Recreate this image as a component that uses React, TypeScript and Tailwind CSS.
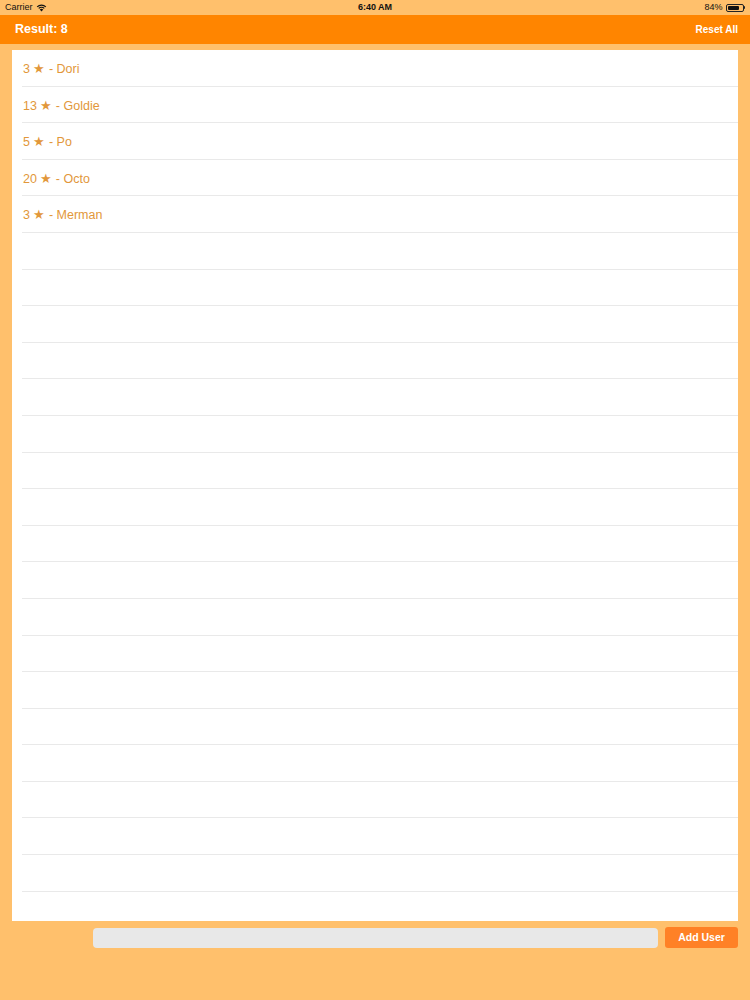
import React from 'react';

const users = [
  { stars: 3, name: 'Dori' },
  { stars: 13, name: 'Goldie' },
  { stars: 5, name: 'Po' },
  { stars: 20, name: 'Octo' },
  { stars: 3, name: 'Merman' },
];

const EMPTY_ROWS = 19;

const WifiIcon = () => (
  <svg width="11" height="8" viewBox="0 0 22 16" className="ml-[3px]">
    <path d="M11 15 L7.5 11 A5 5 0 0 1 14.5 11 Z" fill="#111" />
    <path d="M4.6 8 A9 9 0 0 1 17.4 8 L15.8 9.7 A6.8 6.8 0 0 0 6.2 9.7 Z" fill="#111" />
    <path d="M1.5 4.8 A13.5 13.5 0 0 1 20.5 4.8 L18.9 6.5 A11.3 11.3 0 0 0 3.1 6.5 Z" fill="#111" />
  </svg>
);

const Battery = () => (
  <div className="flex items-center ml-[3px]">
    <div className="w-[18px] h-[8px] rounded-[2px] border border-[#222] p-[1px]">
      <div className="h-full w-[84%] bg-[#111] rounded-[1px]" />
    </div>
    <div className="w-[1.5px] h-[3px] bg-[#222] rounded-r-sm" />
  </div>
);

export default function App() {
  return (
    <div
      className="w-[750px] h-[1000px] bg-[#ffc06c] flex flex-col overflow-hidden"
      style={{ fontFamily: '"Liberation Sans", Arial, sans-serif' }}
    >
      {/* status bar */}
      <div className="h-[15px] flex items-center justify-between px-[5px] text-[9px] text-[#111]">
        <div className="flex items-center w-[120px]">
          <span>Carrier</span>
          <WifiIcon />
        </div>
        <span className="font-bold">6:40 AM</span>
        <div className="flex items-center justify-end w-[120px]">
          <span>84%</span>
          <Battery />
        </div>
      </div>

      {/* nav bar */}
      <div className="h-[29px] bg-[#ff8500] flex items-center justify-between pl-[15px] pr-[12px] text-white font-bold">
        <span className="text-[12.5px]">Result: 8</span>
        <span className="text-[10px]">Reset All</span>
      </div>

      {/* list */}
      <div className="mx-[12px] mt-[6px] h-[871px] bg-white overflow-hidden">
        {users.map((u, i) => (
          <div key={i} className="h-[36.6px] ml-[10px] border-b border-[#e9e9e9] flex items-center pl-[1px] pt-[3px]">
            <span className="text-[12.5px] text-[#e2973a]">
              {u.stars} ★ - {u.name}
            </span>
          </div>
        ))}
        {Array.from({ length: EMPTY_ROWS }).map((_, i) => (
          <div key={'e' + i} className="h-[36.6px] ml-[10px] border-b border-[#e9e9e9]" />
        ))}
      </div>

      {/* input row */}
      <div className="flex items-center mt-[6px] pl-[93px] pr-[12px] gap-[7px]">
        <input className="flex-1 h-[20px] bg-[#e8e8e8] rounded-[4px] outline-none px-2 text-[11px]" />
        <button className="w-[73px] h-[21px] bg-[#ff8126] rounded-[3px] text-white text-[10.5px] font-bold">
          Add User
        </button>
      </div>
    </div>
  );
}
